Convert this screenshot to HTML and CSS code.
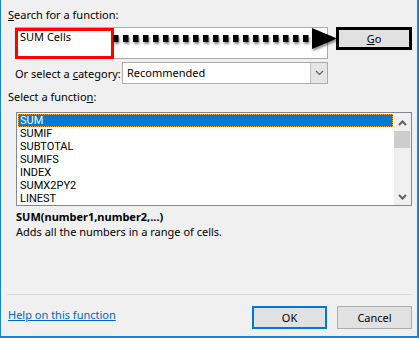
FILE: index.html
```html
<!DOCTYPE html>
<html lang="en">

<head>
    <meta charset="UTF-8">
    <meta name="viewport" content="width=device-width, initial-scale=1.0">
    <title>Insert Function</title>
    <link rel="stylesheet" href="styles.css">
</head>

<body>
    <div class="dialog">
        <div class="label"><u>S</u>earch for a function:</div>
        <div class="search-row">
            <div class="textbox">SUM Cells</div>
            <button class="btn btn-go"><u>G</u>o</button>
            <div class="callout"></div>
            <svg class="pointer" width="232" height="26" viewBox="0 0 232 26">
                <defs>
                    <filter id="shadow" x="-10%" y="-50%" width="120%" height="200%">
                        <feDropShadow dx="1" dy="2" stdDeviation="1.2" flood-color="#000" flood-opacity="0.45" />
                    </filter>
                </defs>
                <g filter="url(#shadow)">
                    <line x1="3" y1="11.5" x2="204" y2="11.5" stroke="#000" stroke-width="7" stroke-dasharray="5.5 4.5" />
                    <polygon points="202,1 202,22 227,11.5" fill="#000" />
                </g>
            </svg>
        </div>
        <div class="category-row">
            <span>Or select a <u>c</u>ategory:</span>
            <div class="select">
                <span class="select-value">Recommended</span>
                <span class="select-arrow">
                    <svg width="9" height="6" viewBox="0 0 9 6">
                        <path d="M1 1 L4.5 4.5 L8 1" fill="none" stroke="#606060" stroke-width="1.2" />
                    </svg>
                </span>
            </div>
        </div>
        <div class="label label-list">Select a functio<u>n</u>:</div>
        <div class="listbox">
            <ul class="items">
                <li class="selected">SUM</li>
                <li>SUMIF</li>
                <li>SUBTOTAL</li>
                <li>SUMIFS</li>
                <li>INDEX</li>
                <li>SUMX2PY2</li>
                <li>LINEST</li>
            </ul>
            <div class="scrollbar">
                <div class="sb-btn sb-up">
                    <svg width="9" height="6" viewBox="0 0 9 6">
                        <path d="M1 5 L4.5 1.5 L8 5" fill="none" stroke="#606060" stroke-width="2" />
                    </svg>
                </div>
                <div class="sb-track">
                    <div class="sb-thumb"></div>
                </div>
                <div class="sb-btn">
                    <svg width="9" height="6" viewBox="0 0 9 6">
                        <path d="M1 1 L4.5 4.5 L8 1" fill="none" stroke="#606060" stroke-width="2" />
                    </svg>
                </div>
            </div>
        </div>
        <div class="signature">SUM(number1,number2,...)</div>
        <div class="description">Adds all the numbers in a range of cells.</div>
        <div class="footer">
            <a class="help" href="#">Help on this function</a>
            <div class="buttons">
                <button class="btn btn-default">OK</button>
                <button class="btn">Cancel</button>
            </div>
        </div>
    </div>
</body>

</html>
```

FILE: styles.css
```css
* {
    box-sizing: border-box;
    margin: 0;
    padding: 0;
}

body {
    background: #f0f0f0;
    font-family: "Noto Sans", sans-serif;
    font-size: 11px;
    color: #000;
}

.dialog {
    width: 419px;
    height: 338px;
    display: flex;
    flex-direction: column;
    background: #f0f0f0;
    border-left: 1px solid #1883d7;
    border-right: 2px solid #1883d7;
    border-bottom: 2px solid #1883d7;
    padding: 8px 5px 7px 7px;
}

.label {
    line-height: 14px;
}

.search-row {
    position: relative;
    display: flex;
    margin: 5px 0 0 7px;
}

.textbox {
    width: 313px;
    height: 32px;
    background: #fff;
    border: 1px solid #ababab;
    padding: 2px 4px;
    line-height: 14px;
}

.btn {
    font: inherit;
    width: 75px;
    height: 23px;
    background: #e1e1e1;
    border: 1px solid #adadad;
    color: #000;
}

.btn-go {
    width: 76px;
    margin-left: auto;
    border: 3px solid #000;
}

.callout {
    position: absolute;
    left: 0;
    top: 1px;
    width: 99px;
    height: 31px;
    border: 3px solid #f00;
}

.pointer {
    position: absolute;
    left: 95px;
    top: 0;
}

.category-row {
    display: flex;
    align-items: center;
    width: 313px;
    margin: 3px 0 0 7px;
}

.select {
    display: flex;
    width: 206px;
    height: 22px;
    margin-left: auto;
    background: #fff;
    border: 1px solid #acacac;
}

.select-value {
    flex: 1;
    padding-left: 4px;
    line-height: 20px;
}

.select-arrow {
    display: flex;
    align-items: center;
    justify-content: center;
    width: 17px;
    background: #e5e5e5;
    border-left: 1px solid #c4c4c4;
}

.label-list {
    margin-top: 6px;
}

.listbox {
    display: flex;
    width: 396px;
    height: 94px;
    margin: 8px 0 0 8px;
    background: #fff;
    border: 1px solid #828790;
}

.items {
    list-style: none;
    width: 375px;
    margin: 1px 0 0 1px;
    font-family: Roboto, "Noto Sans", sans-serif;
}

.items li {
    height: 13px;
    line-height: 13px;
    padding-left: 2px;
}

.items .selected {
    background: #0078d7;
    color: #fff;
    outline: 1px dotted #f7a133;
    outline-offset: -1px;
}

.scrollbar {
    display: flex;
    flex-direction: column;
    width: 17px;
    margin-left: auto;
    background: #f0f0f0;
}

.sb-btn {
    display: flex;
    align-items: center;
    justify-content: center;
    height: 17px;
}

.sb-up {
    padding-top: 2px;
}

.sb-track {
    flex: 1;
}

.sb-thumb {
    height: 17px;
    margin: 1px 1px 0 0;
    background: #cdcdcd;
}

.signature,
.description {
    line-height: 15px;
    margin-left: 8px;
}

.signature {
    margin-top: 3px;
    font-weight: bold;
}

.footer {
    display: flex;
    align-items: flex-start;
    margin: auto 0 0 -1px;
    padding-top: 11px;
    border-top: 1px solid #dcdcdc;
}

.help {
    margin: 2px 0 0 1px;
    line-height: 14px;
    color: #0066cc;
}

.buttons {
    display: flex;
    gap: 10px;
    margin-left: auto;
}

.btn-default {
    border: 2px solid #0078d7;
}
```
